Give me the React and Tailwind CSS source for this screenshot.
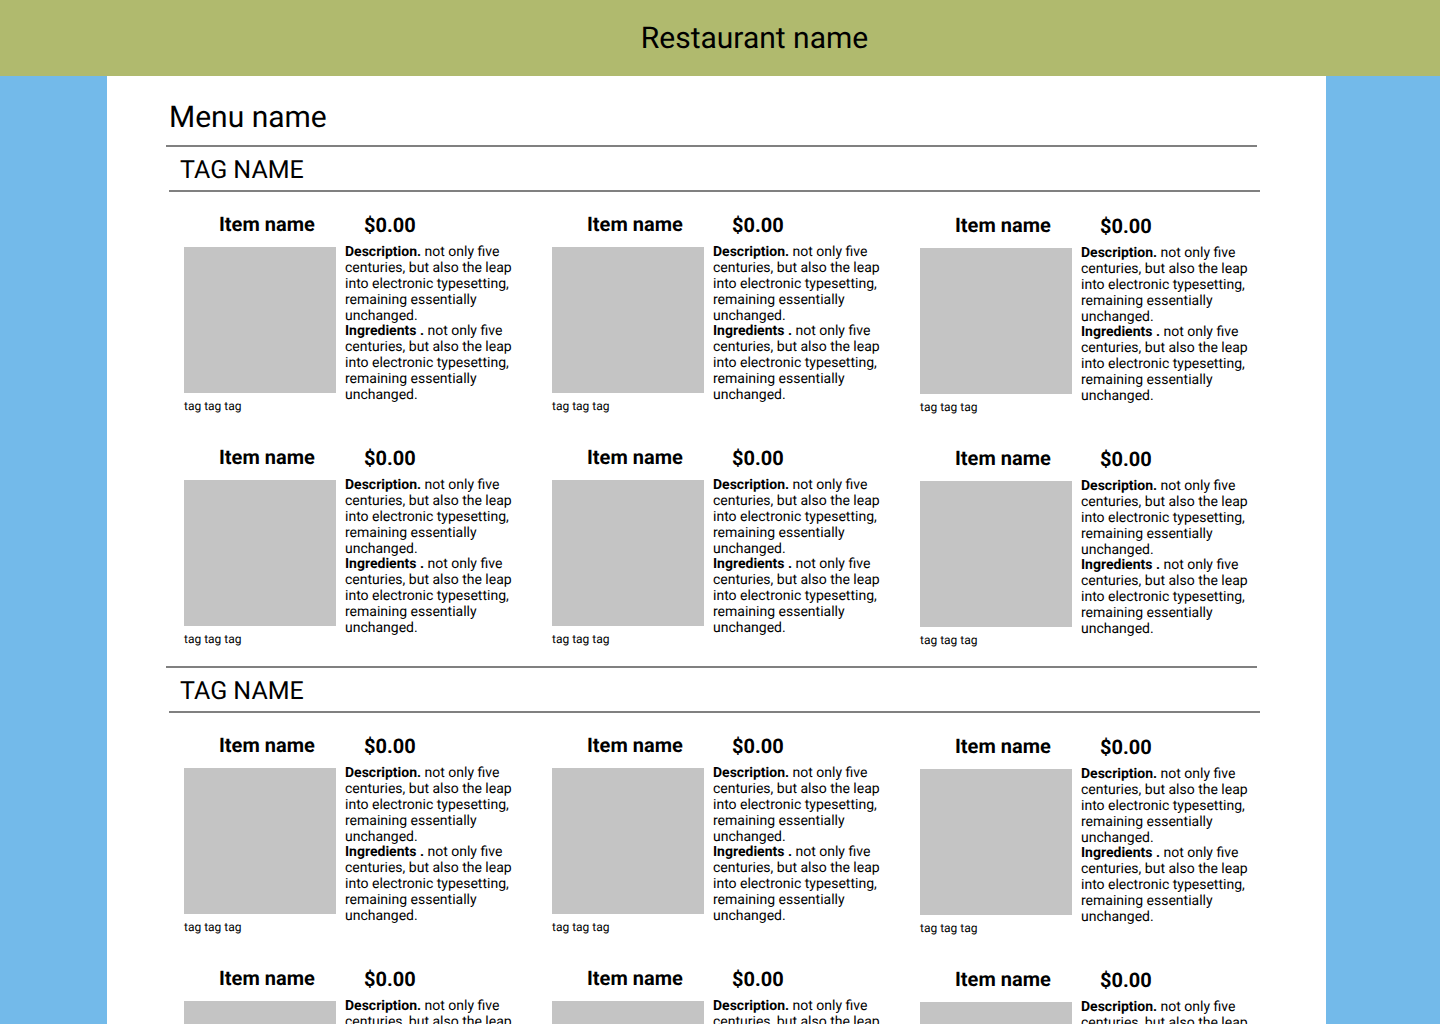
const rows = [0, 1]
const cols = [0, 1, 2]

function Item() {
  return (
    <div className="w-[368px] h-[233px]">
      <div className="flex h-[42px] items-start pt-[11px] pl-[35px] font-bold text-[20px] leading-[23px]">
        <span className="w-[145px]">Item name</span>
        <span className="leading-[24px]">$0.00</span>
      </div>
      <div className="flex">
        <div className="w-[152px] shrink-0">
          <div className="h-[146px] bg-[#c4c4c4] mt-[3px]" />
          <p className="mt-[6px] text-[12px] leading-[14px]">tag tag tag</p>
        </div>
        <div className="ml-[9px] w-[180px] text-[14px] leading-[16px]">
          <p><b>Description.</b> not only five centuries, but also the leap into electronic typesetting, remaining essentially unchanged.</p>
          <p className="-mt-px"><b>Ingredients .</b> not only five centuries, but also the leap into electronic typesetting, remaining essentially unchanged.</p>
        </div>
      </div>
    </div>
  )
}

function Section() {
  return (
    <section className="h-[521px]">
      <div className="h-[2px] w-[1091px] bg-[#808080]" />
      <h2 className="h-[43px] pl-[14px] pt-[9px] text-[25px] leading-[29px]">TAG NAME</h2>
      <div className="h-[2px] w-[1091px] ml-[3px] bg-[#808080]" />
      <div className="ml-[18px] mt-[10px] flex">
        {cols.map((c) => (
          <div key={c} className={c === 2 ? 'mt-px' : ''}>
            {rows.map((r) => <Item key={r} />)}
          </div>
        ))}
      </div>
    </section>
  )
}

export default function App() {
  return (
    <div className="h-screen overflow-hidden flex flex-col bg-[#73baea] text-black font-['Roboto',sans-serif] [text-rendering:geometricPrecision]">
      <header className="h-[76px] shrink-0 bg-[#b0ba6e] flex items-center justify-center pl-[69px]">
        <h1 className="text-[30px] leading-[35px]">Restaurant name</h1>
      </header>
      <main className="flex-1 overflow-hidden ml-[107px] mr-[114px] bg-white pl-[59px]">
        <h1 className="h-[69px] pl-[3px] pt-[24px] text-[30px] leading-[35px]">Menu name</h1>
        <Section />
        <Section />
      </main>
    </div>
  )
}
